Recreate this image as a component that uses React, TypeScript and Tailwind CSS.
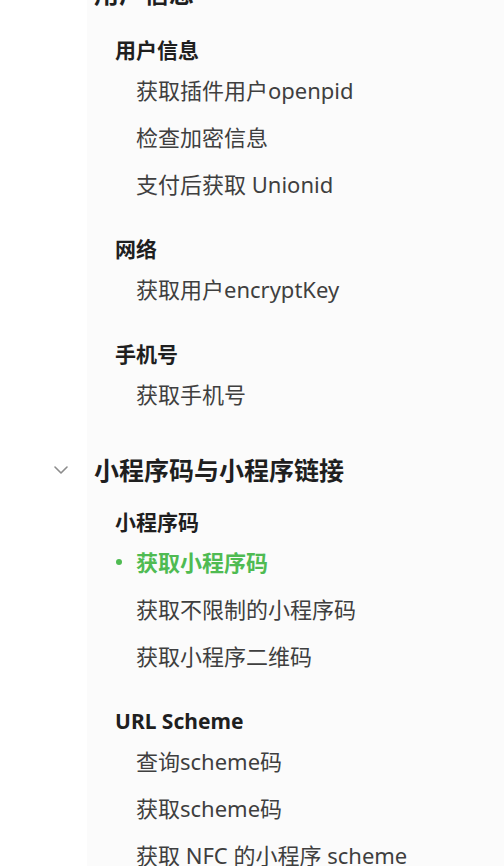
import React from 'react';

type Group = {
  title: string;
  items: string[];
  active?: string;
};

type Section = {
  title: string;
  groups: Group[];
};

const sections: Section[] = [
  {
    title: '用户信息',
    groups: [
      { title: '用户信息', items: ['获取插件用户openpid', '检查加密信息', '支付后获取 Unionid'] },
      { title: '网络', items: ['获取用户encryptKey'] },
      { title: '手机号', items: ['获取手机号'] },
    ],
  },
  {
    title: '小程序码与小程序链接',
    groups: [
      {
        title: '小程序码',
        items: ['获取小程序码', '获取不限制的小程序码', '获取小程序二维码'],
        active: '获取小程序码',
      },
      { title: 'URL Scheme', items: ['查询scheme码', '获取scheme码', '获取 NFC 的小程序 scheme'] },
    ],
  },
];

const Chevron = () => (
  <svg width="14" height="8" viewBox="0 0 14 8" fill="none" className="shrink-0">
    <path d="M1 1l6 6 6-6" stroke="#8c8c8c" strokeWidth="1.6" strokeLinecap="round" strokeLinejoin="round" />
  </svg>
);

const NavItem: React.FC<{ label: string; active?: boolean }> = ({ label, active }) => {
  if (active) {
    return (
      <div className="h-[47px] pb-[4px] flex items-center pl-[29px] gap-[14px]">
        <span className="w-[6px] h-[6px] rounded-full bg-[#4fbb52]" />
        <span className="text-[22px] leading-none font-bold text-[#4fbb52] whitespace-nowrap">{label}</span>
      </div>
    );
  }
  return (
    <div className="h-[47px] pb-[4px] flex items-center pl-[49px]">
      <span className="text-[22px] leading-none text-[#3f3f3f] whitespace-nowrap">{label}</span>
    </div>
  );
};

export default function App() {
  return (
    <div className="h-screen overflow-hidden flex font-['Noto_Sans','Noto_Sans_CJK_SC',sans-serif]">
      <div className="w-[87px] shrink-0 bg-white" />
      <div className="flex-1 bg-[#fbfbfb]">
        <div className="-mt-[33px]">
          {sections.map((section, si) => (
            <div key={section.title} className={si > 0 ? 'mt-[25px]' : ''}>
              <div className="h-[52px] flex items-center -ml-[33px] gap-[26px]">
                <Chevron />
                <span className="text-[25px] leading-none font-bold text-[#1f1f1f] whitespace-nowrap">
                  {section.title}
                </span>
              </div>
              {section.groups.map((group, gi) => (
                <div
                  key={group.title + gi}
                  className={gi > 0 ? 'mt-[22px]' : si === 0 ? 'mt-[13px]' : 'mt-[8px]'}
                >
                  <div className="h-[36px] flex items-center pl-[28px]">
                    <span className="text-[21px] leading-none font-bold text-[#1f1f1f] whitespace-nowrap">
                      {group.title}
                    </span>
                  </div>
                  {group.items.map((item) => (
                    <NavItem key={item} label={item} active={item === group.active} />
                  ))}
                </div>
              ))}
            </div>
          ))}
        </div>
      </div>
    </div>
  );
}
